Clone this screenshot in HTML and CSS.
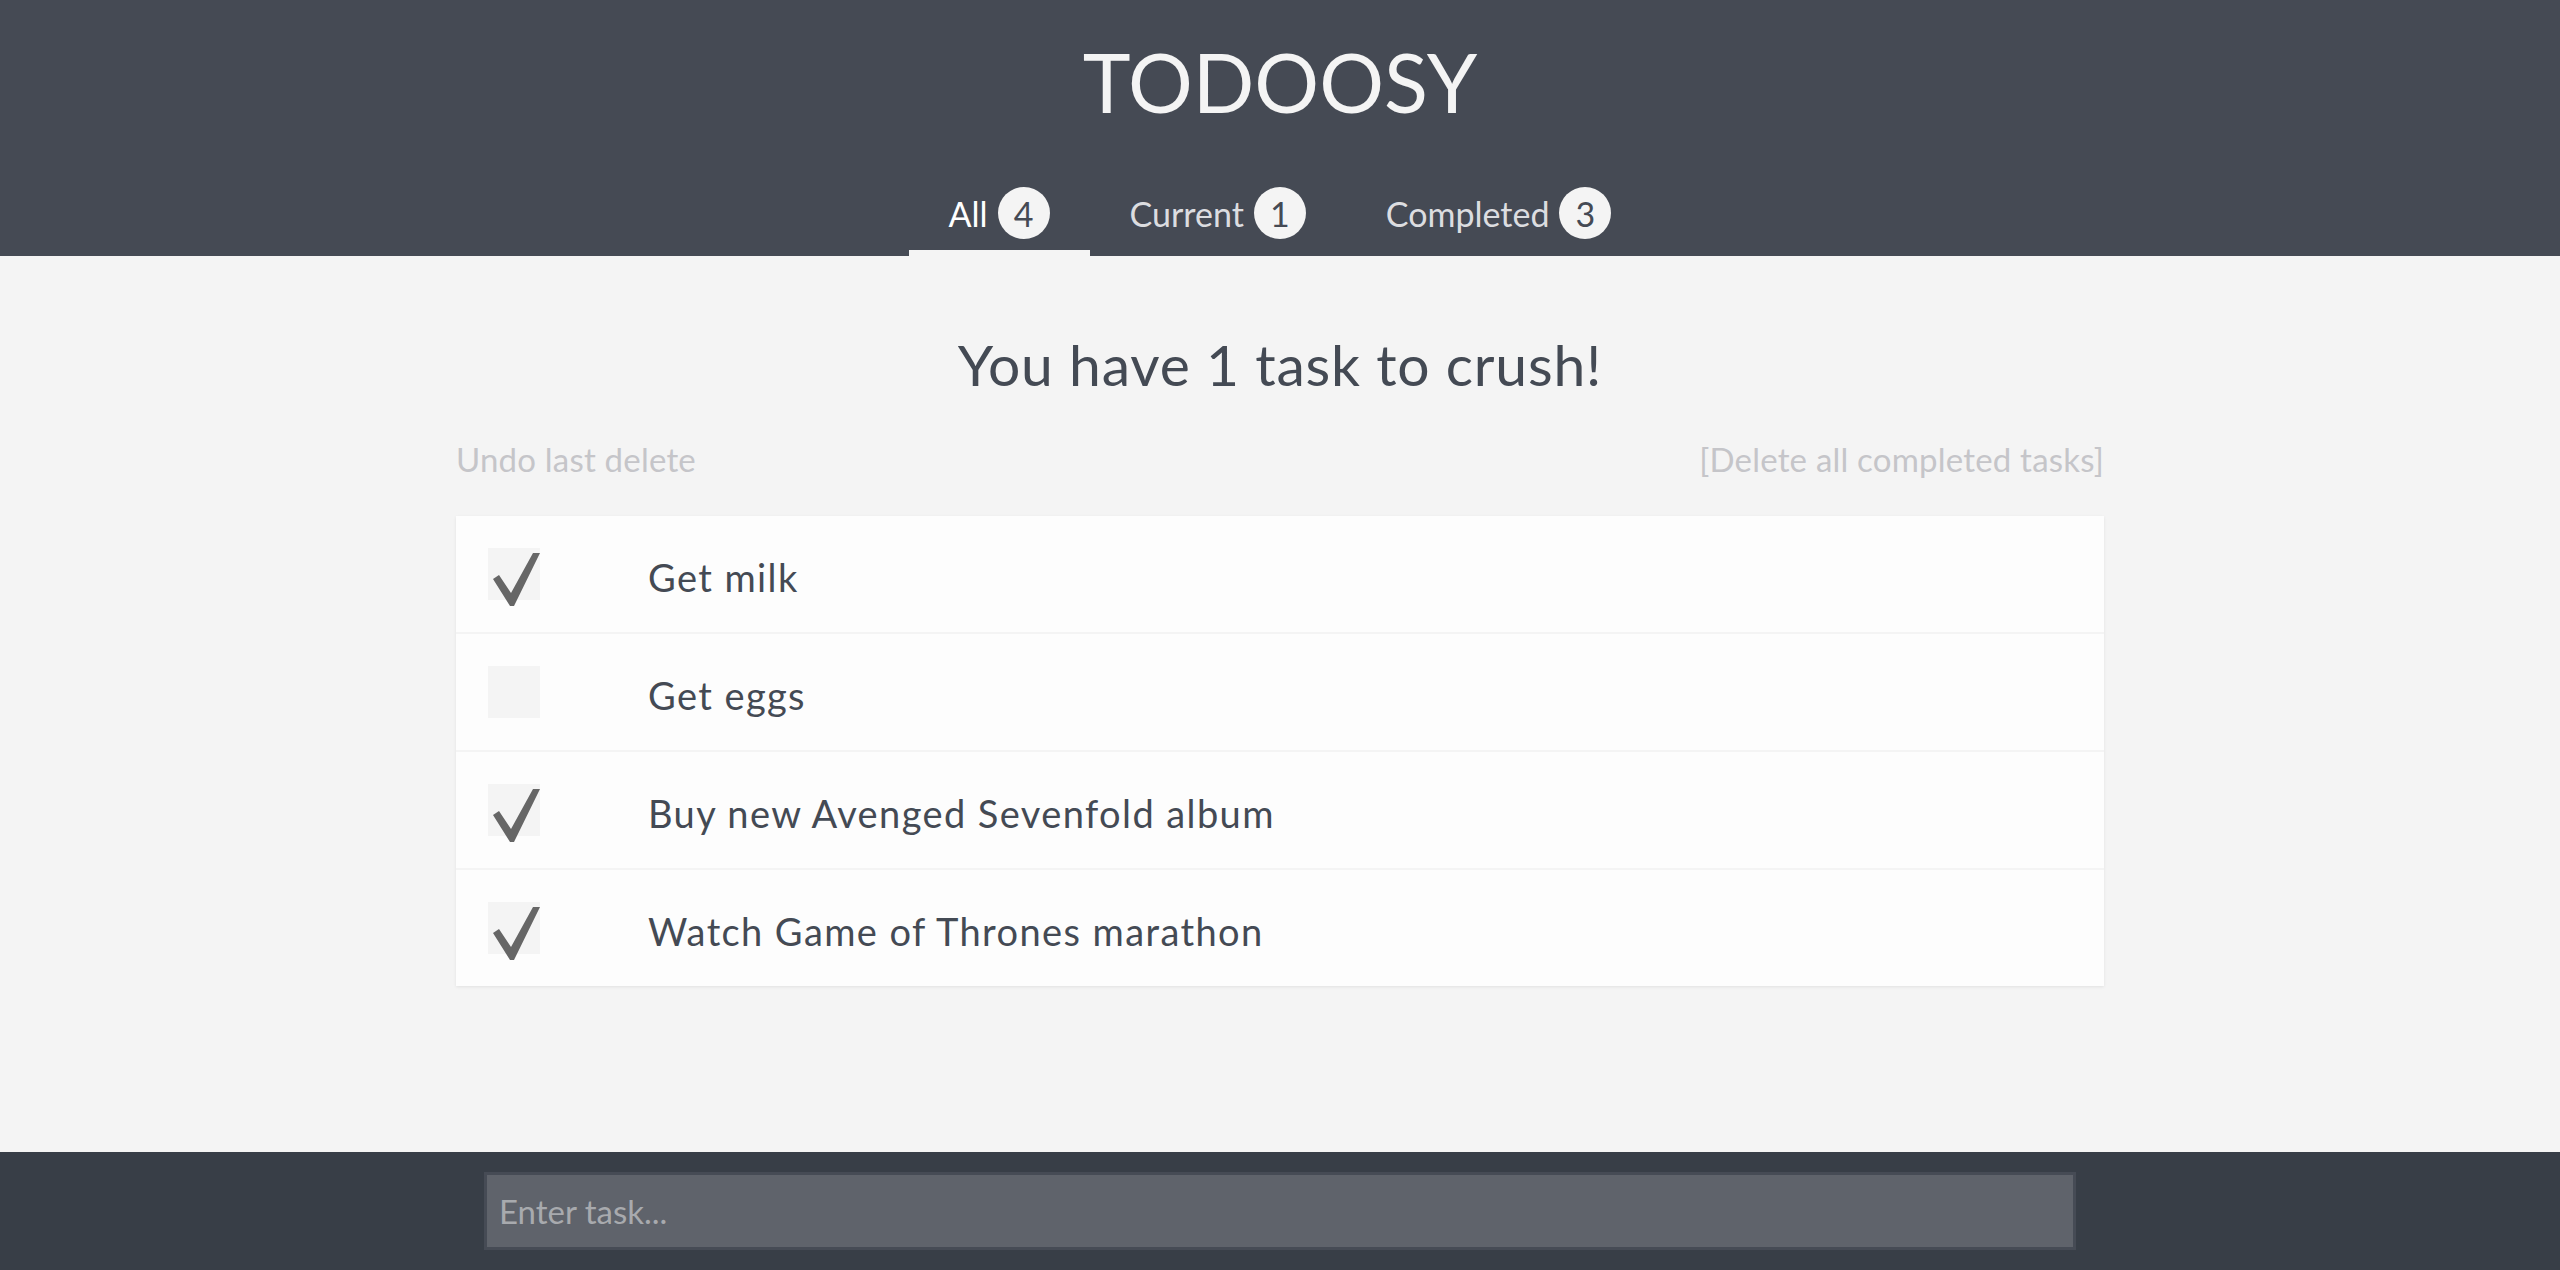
FILE: index.html
```html
<!DOCTYPE html>
<html lang="en">
<head>
<meta charset="utf-8">
<title>Todoosy</title>
<link rel="stylesheet" href="styles.css">
</head>
<body>
<header class="header">
  <h1 class="brand">TODOOSY</h1>
  <nav class="tabs">
    <a class="tab tab-active">All <span class="badge">4</span></a>
    <a class="tab">Current <span class="badge">1</span></a>
    <a class="tab">Completed <span class="badge">3</span></a>
  </nav>
</header>
<main class="main">
  <h2 class="summary">You have 1 task to crush!</h2>
  <div class="actions">
    <span class="action">Undo last delete</span>
    <span class="action">[Delete all completed tasks]</span>
  </div>
  <ul class="list">
    <li class="item">
      <span class="check"><svg viewBox="0 0 52 52" class="tick"><polygon points="5,31 11,27 23,45 45,5 52,5 26,58 22,58"/></svg></span>
      <span class="label">Get milk</span>
    </li>
    <li class="item">
      <span class="check"></span>
      <span class="label">Get eggs</span>
    </li>
    <li class="item">
      <span class="check"><svg viewBox="0 0 52 52" class="tick"><polygon points="5,31 11,27 23,45 45,5 52,5 26,58 22,58"/></svg></span>
      <span class="label">Buy new Avenged Sevenfold album</span>
    </li>
    <li class="item">
      <span class="check"><svg viewBox="0 0 52 52" class="tick"><polygon points="5,31 11,27 23,45 45,5 52,5 26,58 22,58"/></svg></span>
      <span class="label">Watch Game of Thrones marathon</span>
    </li>
  </ul>
</main>
<footer class="footer">
  <input class="task-input" type="text" placeholder="Enter task...">
</footer>
</body>
</html>
```

FILE: styles.css
```css
html, body {
  margin: 0;
  padding: 0;
}
body {
  height: 1270px;
  display: flex;
  flex-direction: column;
  background: #f4f4f4;
  font-family: "Lato", "Liberation Sans", sans-serif;
  color: #444a54;
}
.header {
  background: #454a54;
  height: 256px;
  display: flex;
  flex-direction: column;
  align-items: center;
  box-sizing: border-box;
}
.brand {
  margin: 33px 0 0;
  font-size: 81px;
  line-height: 98px;
  font-weight: 400;
  color: #f4f4f4;
}
.tabs {
  margin-top: 56px;
  display: flex;
}
.tab {
  display: flex;
  align-items: center;
  gap: 10px;
  padding: 0 40px 11px;
  border-bottom: 6px solid transparent;
  font-size: 34px;
  color: #dcdde0;
}
.tab-active {
  color: #ffffff;
  border-bottom-color: #f4f4f4;
}
.badge {
  width: 52px;
  height: 52px;
  border-radius: 50%;
  background: #f4f4f4;
  color: #454a54;
  display: flex;
  align-items: center;
  justify-content: center;
  font-size: 34px;
}
.main {
  flex: 1;
  width: 1648px;
  margin: 0 auto;
}
.summary {
  margin: 74px 0 0;
  text-align: center;
  font-size: 57px;
  line-height: 68px;
  font-weight: 400;
  letter-spacing: 0.8px;
  color: #444a54;
}
.actions {
  margin-top: 41px;
  display: flex;
  justify-content: space-between;
  font-size: 33px;
  line-height: 40px;
  letter-spacing: 0.2px;
  color: #c5c5c9;
}
.list {
  list-style: none;
  margin: 37px 0 0;
  padding: 0;
  background: #fdfdfd;
  box-shadow: 0 1px 3px rgba(0,0,0,0.08);
}
.item {
  height: 116px;
  display: flex;
  align-items: center;
  padding-left: 32px;
  border-top: 2px solid #f4f4f4;
}
.item:first-child {
  border-top: 0;
}
.check {
  width: 52px;
  height: 52px;
  background: #f4f4f4;
  flex: none;
}
.tick {
  width: 52px;
  height: 52px;
  overflow: visible;
  fill: #666666;
  display: block;
}
.label {
  margin-left: 108px;
  padding-top: 6px;
  font-size: 38px;
  letter-spacing: 1.4px;
  color: #444a54;
}
.footer {
  height: 118px;
  background: #383e47;
  display: flex;
  justify-content: center;
  padding-top: 20px;
  box-sizing: border-box;
}
.task-input {
  width: 1592px;
  height: 78px;
  box-sizing: border-box;
  border: 3px solid #464b55;
  background: #5f636b;
  padding: 0 12px;
  font-family: "Lato", "Liberation Sans", sans-serif;
  font-size: 33px;
  color: #f4f4f4;
  outline: none;
}
.task-input::placeholder {
  color: #a8aaae;
}
```
